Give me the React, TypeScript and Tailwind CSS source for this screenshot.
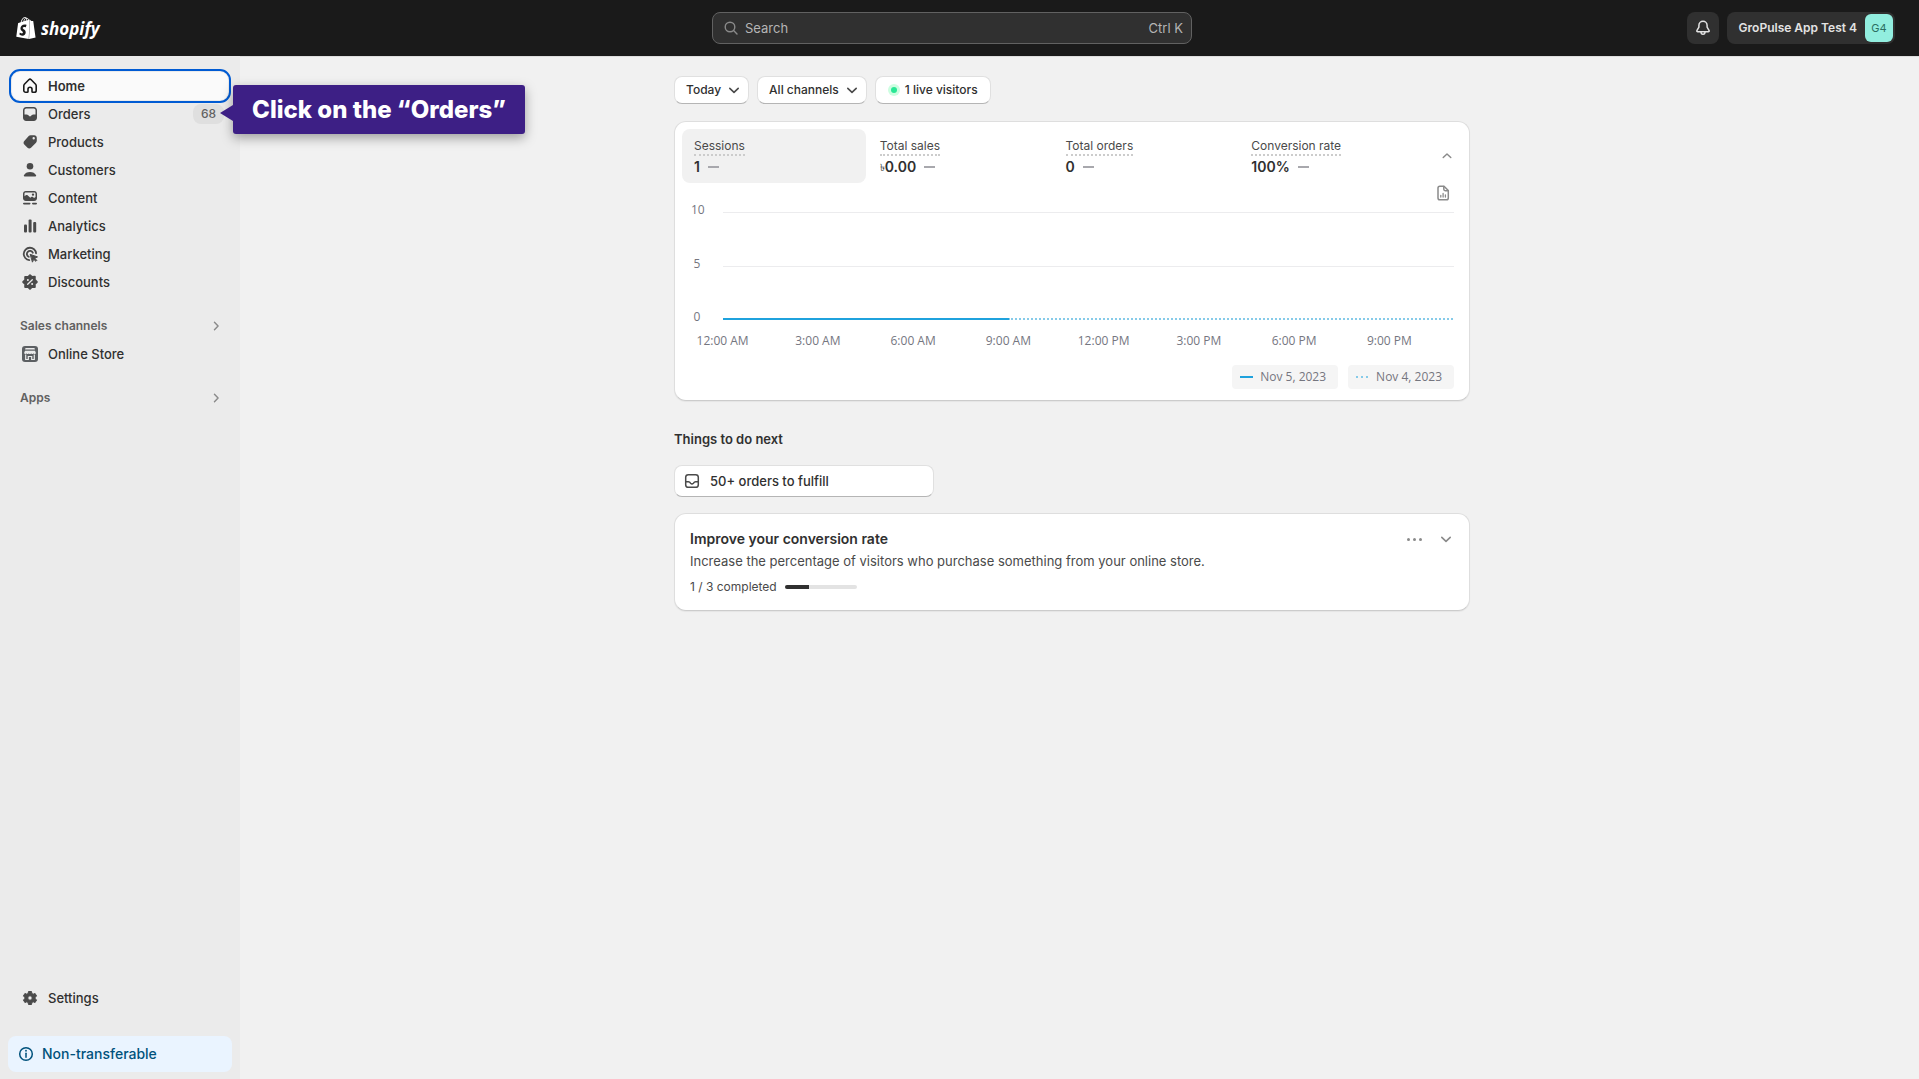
import React from 'react';
import { SiShopify } from 'react-icons/si';

type IconProps = { className?: string };

const HomeIcon = ({ className }: IconProps) => (
  <svg viewBox="0 0 20 20" className={className} fill="none" stroke="currentColor" strokeWidth="1.6" strokeLinejoin="round" strokeLinecap="round">
    <path d="M8 13.2v2.3c0 .4-.3.8-.8.8H5.6c-1 0-1.8-.8-1.8-1.8V9.7c0-.6.2-1.1.6-1.5l4.4-4.5c.7-.7 1.7-.7 2.4 0l4.4 4.5c.4.4.6.9.6 1.5v4.8c0 1-.8 1.8-1.8 1.8h-1.6c-.5 0-.8-.4-.8-.8v-2.3c0-1.100-.9-2-2-2s-2 .9-2 2z" />
  </svg>
);

const InboxFilled = ({ className }: IconProps) => (
  <svg viewBox="0 0 20 20" className={className} fill="currentColor">
    <path fillRule="evenodd" d="M6.2 3h7.600C15.600 3 17 4.400 17 6.200v7.600c0 1.800-1.400 3.200-3.200 3.200H6.200C4.400 17 3 15.600 3 13.800V6.200C3 4.400 4.400 3 6.200 3zm.1 1.500c-1 0-1.800.8-1.800 1.800V10.500h2.200c.6 0 1 .2 1.400.6l1 1c.5.5 1.300.5 1.800 0l1-1c.4-.4.8-.6 1.400-.6h2.200V6.300c0-1-.8-1.800-1.800-1.800z" />
  </svg>
);

const InboxOutline = ({ className }: IconProps) => (
  <svg viewBox="0 0 20 20" className={className} fill="none" stroke="currentColor" strokeWidth="1.500">
    <rect x="3.700" y="3.700" width="12.600" height="12.600" rx="2.600" />
    <path d="M3.700 10.700h2.800c.4 0 .7.200 1 .4l1.100 1.200c.8.800 2 .8 2.800 0l1.100-1.200c.3-.2.600-.4 1-.4h2.800" />
  </svg>
);

const TagIcon = ({ className }: IconProps) => (
  <svg viewBox="0 0 20 20" className={className} fill="currentColor">
    <path fillRule="evenodd" d="M10.500 3.200h3.800c1.400 0 2.500 1.100 2.500 2.500v3c0 .8-.3 1.500-.8 2l-5 5c-1 1-2.500 1-3.500 0l-3.200-3.200c-1-1-1-2.500 0-3.500l4.400-5.100c.5-.5 1.100-.7 1.800-.7zm3.200 4.300a1.200 1.200 0 1 0 0-2.400 1.200 1.200 0 0 0 0 2.400z" />
  </svg>
);

const PersonIcon = ({ className }: IconProps) => (
  <svg viewBox="0 0 20 20" className={className} fill="currentColor">
    <circle cx="10" cy="6.300" r="3.300" />
    <path d="M4.600 16.500c-.6 0-1-.6-.7-1.200C4.900 13.200 7.200 12 10 12s5.100 1.200 6.100 3.300c.3.600-.1 1.200-.7 1.200z" />
  </svg>
);

const ContentIcon = ({ className }: IconProps) => (
  <svg viewBox="0 0 20 20" className={className} fill="currentColor">
    <path fillRule="evenodd" d="M5.800 3h8.400C15.700 3 17 4.300 17 5.800v4.400c0 1.500-1.300 2.800-2.800 2.800H5.800C4.300 13 3 11.700 3 10.200V5.800C3 4.300 4.300 3 5.800 3zm0 1.500c-.8 0-1.300.5-1.300 1.300v2.500l1.300-1c.6-.5 1.400-.5 2 .1L10.300 9.700l.9-.7c.6-.4 1.300-.4 1.800 0l1 .9 1.500-.9V5.800c0-.8-.5-1.300-1.300-1.300zM13 5.400a1.200 1.200 0 1 1 0 2.400 1.200 1.200 0 0 1 0-2.400z" />
    <rect x="3" y="14.700" width="7.500" height="1.700" rx=".8" />
    <rect x="12" y="14.700" width="5" height="1.700" rx=".8" />
  </svg>
);

const BarsIcon = ({ className }: IconProps) => (
  <svg viewBox="0 0 20 20" className={className} fill="currentColor">
    <rect x="4" y="8.500" width="3" height="8" rx="1" />
    <rect x="8.600" y="3.500" width="3" height="13" rx="1" />
    <rect x="13.200" y="6" width="3" height="10.500" rx="1" />
  </svg>
);

const TargetIcon = ({ className }: IconProps) => (
  <svg viewBox="0 0 20 20" className={className} fill="none" stroke="currentColor" strokeWidth="1.800" strokeLinecap="round">
    <path d="M9.300 16.100A6.200 6.200 0 1 1 16.100 9.300" />
    <path d="M8.700 12.800A3.100 3.100 0 1 1 12.800 8.700" />
    <path d="M10.500 10.500l7 2.400-2.700 1.300 2 2.200-.9.900-2.200-2-1.100 2.500z" fill="currentColor" strokeWidth="1" strokeLinejoin="round" />
  </svg>
);

const DiscountIcon = ({ className }: IconProps) => (
  <svg viewBox="0 0 20 20" className={className}>
    <path fill="currentColor" stroke="currentColor" strokeWidth="2" strokeLinejoin="round" d="M10 3.200l1.900 1.700 2.900-.1-.1 2.900L16.800 10l-2.100 2.100.1 2.900-2.900-.1L10 16.800l-1.900-1.900-2.900.1.100-2.900L3.200 10l2.100-2.100L5.200 5l2.900.1z" />
    <path stroke="#ebebeb" strokeWidth="1.300" strokeLinecap="round" d="M12.300 7.700l-4.600 4.600" />
    <circle cx="7.900" cy="8" r="1" fill="#ebebeb" />
    <circle cx="12.100" cy="12" r="1" fill="#ebebeb" />
  </svg>
);

const StoreIcon = ({ className }: IconProps) => (
  <svg viewBox="0 0 20 20" className={className}>
    <rect x="2" y="2" width="16" height="16" rx="3" fill="#5c5f62" />
    <path fill="#ebebeb" d="M5.500 4h9l.4 1.600H5.100zM5 6.800h10l.9 2.300c0 1.200-2.400 1.200-2.400.2 0 1-2.300 1-2.300 0 0 1-2.400 1-2.400 0 0 1-2.300 1-2.300 0 0 1-2.400 1-2.400-.2z" />
    <path fill="none" stroke="#ebebeb" strokeWidth="1.200" d="M5.700 10.500v5h2.600v-3h3.400v3h2.600v-5" />
  </svg>
);

const GearIcon = ({ className }: IconProps) => (
  <svg viewBox="0 0 20 20" className={className} fill="currentColor">
    <path
      fillRule="evenodd"
      stroke="currentColor"
      strokeWidth="1"
      strokeLinejoin="round"
      d="M8.500 3.500h3l.4 2 1.200.7 2-.7 1.500 2.600L15 9.500v1l1.600 1.400-1.500 2.600-2-.7-1.200.7-.4 2h-3l-.4-2-1.200-.7-2 .7-1.500-2.600L5 10.500v-1L3.400 8.100l1.500-2.600 2 .7 1.200-.7zM10 12.200a2.200 2.200 0 1 0 0-4.400 2.200 2.200 0 0 0 0 4.400z"
    />
  </svg>
);

const InfoIcon = ({ className }: IconProps) => (
  <svg viewBox="0 0 20 20" className={className} fill="none" stroke="currentColor" strokeWidth="1.500" strokeLinecap="round">
    <circle cx="10" cy="10" r="6.300" />
    <path d="M10 9.300v4" />
    <path d="M10 6.700v.1" strokeWidth="1.800" />
  </svg>
);

const SearchIcon = ({ className }: IconProps) => (
  <svg viewBox="0 0 20 20" className={className} fill="none" stroke="currentColor" strokeWidth="1.400" strokeLinecap="round">
    <circle cx="9" cy="9" r="4.800" />
    <path d="M12.600 12.600l3.400 3.400" />
  </svg>
);

const BellIcon = ({ className }: IconProps) => (
  <svg viewBox="0 0 20 20" className={className} fill="none" stroke="currentColor" strokeWidth="1.500" strokeLinejoin="round">
    <path d="M10 3.300c-2.300 0-4.100 1.800-4.100 4.100v1.800L4 12.300c-.5.800 0 1.500.8 1.500h10.400c.8 0 1.300-.7.8-1.500l-1.900-3.100V7.400c0-2.300-1.800-4.100-4.100-4.100z" />
    <path d="M8 14c0 1.300.9 2.300 2 2.300s2-1 2-2.300" />
  </svg>
);

const Chevron = ({ className }: IconProps) => (
  <svg viewBox="0 0 20 20" className={className} fill="none" stroke="currentColor" strokeWidth="1.600" strokeLinecap="round" strokeLinejoin="round">
    <path d="M5.800 8.300l4.200 4 4.200-4" />
  </svg>
);

const ReportIcon = ({ className }: IconProps) => (
  <svg viewBox="0 0 20 20" className={className} fill="none" stroke="currentColor" strokeWidth="1.500" strokeLinejoin="round" strokeLinecap="round">
    <path d="M11 3.200H6.800c-1 0-1.800.8-1.800 1.800v10c0 1 .8 1.800 1.800 1.800h6.700c1 0 1.800-.8 1.800-1.800V7.500z" />
    <path d="M10.800 3.500v2.800c0 .8.600 1.400 1.400 1.400H15" />
    <path d="M7.800 12.300v1.700M10.100 10.500V14M12.400 12v2" strokeWidth="1.300" />
  </svg>
);

const navItems = [
  { label: 'Orders', Icon: InboxFilled, badge: '68' },
  { label: 'Products', Icon: TagIcon },
  { label: 'Customers', Icon: PersonIcon },
  { label: 'Content', Icon: ContentIcon },
  { label: 'Analytics', Icon: BarsIcon },
  { label: 'Marketing', Icon: TargetIcon },
  { label: 'Discounts', Icon: DiscountIcon },
];

const metrics = [
  { label: 'Sessions', value: '1', active: true },
  { label: 'Total sales', currency: '৳', value: '0.00' },
  { label: 'Total orders', value: '0' },
  { label: 'Conversion rate', value: '100%' },
];

const hours = ['12:00 AM', '3:00 AM', '6:00 AM', '9:00 AM', '12:00 PM', '3:00 PM', '6:00 PM', '9:00 PM'];

function Header() {
  return (
    <header className="grid h-14 shrink-0 grid-cols-[1fr_480px_1fr] items-center bg-[#1a1a1a] pr-[15px] shadow-[0_1px_0_#dedede]">
      <a href="#" aria-label="Shopify" className="flex items-center gap-1 pl-[15px] text-white">
        <SiShopify className="h-6 w-[22px]" />
        <span className="pt-0.5 font-['Open_Sans',sans-serif] text-[17px] leading-6 font-bold italic">shopify</span>
      </a>
      <label className="flex h-8 items-center gap-1 rounded-lg border border-[#616161] bg-[#303030] pr-2 pl-2 text-[13px] text-[#b5b5b5]">
        <SearchIcon className="size-5 text-[#8a8a8a]" />
        <input type="text" placeholder="Search" aria-label="Search" className="min-w-0 flex-1 bg-transparent outline-none placeholder:text-[#b5b5b5]" />
        <span>Ctrl K</span>
      </label>
      <div className="flex justify-end gap-2 pr-[9px]">
        <button aria-label="Notifications" className="flex size-8 items-center justify-center rounded-lg bg-[#303030] text-[#e3e3e3]">
          <BellIcon className="size-5" />
        </button>
        <button className="flex h-8 items-center gap-2 rounded-lg bg-[#303030] pr-0.5 pl-3 text-xs font-semibold text-[#e3e3e3]">
          GroPulse App Test 4
          <span className="flex size-7 items-center justify-center rounded-md bg-[#92eedf] text-[11px] font-normal text-[#2c6e63]">G4</span>
        </button>
      </div>
    </header>
  );
}

function Tooltip() {
  return (
    <div role="tooltip" className="absolute top-[-15px] left-[221px] z-10 flex h-[49px] w-[292px] items-center justify-center rounded-[3px] bg-[#3d1f85] text-2xl font-extrabold whitespace-nowrap text-white shadow-[0_4px_12px_rgba(0,0,0,0.35)]">
      <svg viewBox="0 0 13 16" className="absolute top-5 right-full h-4 w-[13px]" fill="#3d1f85">
        <path d="M13 0v16L0 8z" />
      </svg>
      Click on the “Orders”
    </div>
  );
}

function Sidebar() {
  return (
    <aside className="flex w-60 shrink-0 flex-col bg-[#ebebeb] text-[13px] font-medium text-[#303030]">
      <nav className="px-3 pt-4">
        <a href="#" className="flex h-7 items-center gap-2 rounded-lg bg-[#fafafa] pl-2 font-semibold outline-2 outline-offset-1 outline-[#005bd3]">
          <HomeIcon className="size-5 text-[#1a1a1a]" />
          Home
        </a>
        {navItems.map(({ label, Icon, badge }) => (
          <div key={label} className="relative">
            <a href="#" className="flex h-7 items-center gap-2 pr-1 pl-2">
              <Icon className="size-5 text-[#4a4a4a]" />
              <span className="flex-1">{label}</span>
              {badge && <span className="flex h-5 items-center rounded-lg bg-[#dfdfdf] px-2 text-xs text-[#616161]">{badge}</span>}
            </a>
            {badge && <Tooltip />}
          </div>
        ))}
        <button className="mt-4 flex h-7 w-full items-center justify-between pr-[3px] pl-2 text-xs font-semibold text-[#616161]">
          Sales channels
          <Chevron className="size-[18px] -rotate-90 text-[#8a8a8a]" />
        </button>
        <a href="#" className="flex h-7 items-center gap-2 pl-2">
          <StoreIcon className="size-5" />
          Online Store
        </a>
        <button className="mt-4 flex h-7 w-full items-center justify-between pr-[3px] pl-2 text-xs font-semibold text-[#616161]">
          Apps
          <Chevron className="size-[18px] -rotate-90 text-[#8a8a8a]" />
        </button>
      </nav>
      <div className="mt-auto px-3">
        <a href="#" className="flex h-7 items-center gap-2 pl-2">
          <GearIcon className="size-5 text-[#4a4a4a]" />
          Settings
        </a>
      </div>
      <div className="mx-2 mt-6 mb-[7px] flex h-9 items-center gap-1.5 rounded-lg bg-[#eaf4ff] pl-2 text-sm text-[#00527c]">
        <InfoIcon className="size-5" />
        Non-transferable
      </div>
    </aside>
  );
}

function Filters() {
  const base = 'flex h-7 items-center rounded-lg border border-[#e0e0e0] border-b-[#b5b5b5] bg-white text-xs font-medium text-[#303030]';
  return (
    <div className="flex gap-2">
      <button className={`${base} gap-[3px] pr-1 pl-[11px]`}>
        Today
        <Chevron className="size-5 text-[#4a4a4a]" />
      </button>
      <button className={`${base} gap-[3px] pr-1 pl-[11px]`}>
        All channels
        <Chevron className="size-5 text-[#4a4a4a]" />
      </button>
      <button className={`${base} gap-[5px] px-3`}>
        <span className="flex size-3 items-center justify-center rounded-full bg-[#cdfee1]">
          <span className="size-1.5 rounded-full bg-[#29e795]" />
        </span>
        1 live visitors
      </button>
    </div>
  );
}

function Chart() {
  return (
    <div className="font-['Open_Sans',sans-serif] text-xs leading-4 text-[#75767f]">
      <div className="relative ml-[41px] h-[107px]">
        {[
          ['10', '0%'],
          ['5', '50%'],
          ['0', '100%'],
        ].map(([label, top]) => (
          <div key={label} className="absolute inset-x-0" style={{ top }}>
            <div className={label === '0' ? 'hidden' : 'h-px bg-[#ececee]'} />
            <span className="absolute -top-2.5 -left-8 w-3 text-center">{label}</span>
          </div>
        ))}
        <svg className="absolute -bottom-2 left-0 h-4 w-full">
          <line x1="0" y1="8" x2="100%" y2="8" stroke="#86cbe9" strokeWidth="2" strokeDasharray="2 2" />
          <line x1="0" y1="8" x2="39.2%" y2="8" stroke="#1fa2dd" strokeWidth="2" />
        </svg>
      </div>
      <div className="mt-3.5 -ml-[7px] flex pr-[17px]">
        {hours.map((h) => (
          <span key={h} className="w-0 flex-1 text-center whitespace-nowrap">
            {h}
          </span>
        ))}
      </div>
      <div className="mt-4 flex justify-end gap-2.5">
        {[
          ['Nov 5, 2023', '#1fa2dd', '0'],
          ['Nov 4, 2023', '#86cbe9', '2 3'],
        ].map(([label, color, dash]) => (
          <button key={label} className="flex h-6 items-center gap-[7px] rounded-sm bg-[#f5f5f5] pr-3 pl-2">
            <svg viewBox="0 0 13 2" className="h-0.5 w-[13px]">
              <path d="M0 1h13" stroke={color} strokeWidth="2" strokeDasharray={dash} />
            </svg>
            {label}
          </button>
        ))}
      </div>
    </div>
  );
}

const card = 'rounded-xl border border-[#dedede] border-b-[#cccccc] bg-white shadow-[0_1px_1px_rgba(0,0,0,0.05)]';

function AnalyticsCard() {
  return (
    <section className={`${card} mt-[17px] pt-[7px] pr-[15px] pb-[11px] pl-[7px]`}>
      <div className="flex items-center">
        <div className="grid flex-1 grid-cols-4 gap-0.5 pr-[15px]">
          {metrics.map((m) => (
            <button key={m.label} className={m.active ? 'h-[54px] rounded-lg bg-[#f1f1f1] px-3 text-left' : 'h-[54px] rounded-lg px-3 text-left'}>
              <span className="inline-block border-b-2 border-dotted border-[#cccccc] text-xs leading-[17px] text-[#4a4a4a]">{m.label}</span>
              <span className="flex items-center gap-2 pt-px text-sm leading-5 font-semibold text-[#303030]">
                <span className="flex items-center">
                  {m.currency && <span className="text-[10px] font-normal">{m.currency}</span>}
                  {m.value}
                </span>
                <span className="h-0.5 w-[11px] bg-[#a8a8ad]" />
              </span>
            </button>
          ))}
        </div>
        <button aria-label="Collapse" className="-mr-0.5 text-[#8a8a8a]">
          <Chevron className="size-[18px] rotate-180" />
        </button>
      </div>
      <div className="flex justify-end">
        <button aria-label="View report" className="mr-px text-[#8a8a8a]">
          <ReportIcon className="size-5" />
        </button>
      </div>
      <div className="mt-[9px]">
        <Chart />
      </div>
    </section>
  );
}

function GuideCard() {
  return (
    <section className={`${card} mt-4 h-[98px] px-[15px] pt-[15px]`}>
      <div className="flex items-center">
        <h3 className="flex-1 text-sm leading-5 font-semibold text-[#303030]">Improve your conversion rate</h3>
        <button aria-label="More actions" className="mr-[14px] flex gap-[3px]">
          <span className="size-[3px] rounded-full bg-[#8a8a8a]" />
          <span className="size-[3px] rounded-full bg-[#8a8a8a]" />
          <span className="size-[3px] rounded-full bg-[#8a8a8a]" />
        </button>
        <button aria-label="Expand" className="-mr-0.5 text-[#8a8a8a]">
          <Chevron className="size-5" />
        </button>
      </div>
      <p className="mt-0.5 text-[13px] leading-5 text-[#4a4a4a]">Increase the percentage of visitors who purchase something from your online store.</p>
      <div className="mt-1.5 flex items-center gap-2 text-xs leading-5 text-[#4a4a4a]">
        1 / 3 completed
        <div className="h-1 w-[72px] overflow-hidden rounded-sm bg-[#e3e3e3]">
          <div className="h-full w-1/3 bg-[#303030]" />
        </div>
      </div>
    </section>
  );
}

export default function App() {
  return (
    <div className="flex min-h-screen flex-col bg-[#f1f1f1] font-[Inter,sans-serif] text-[13px] leading-5">
      <Header />
      <div className="flex flex-1">
        <Sidebar />
        <main className="flex-1 pt-5 pr-[15px]">
          <div className="mx-auto max-w-[796px]">
            <Filters />
            <AnalyticsCard />
            <h2 className="mt-7 text-[13px] leading-5 font-semibold text-[#303030]">Things to do next</h2>
            <button className="mt-4 flex h-8 w-[260px] items-center gap-2 rounded-lg border border-[#e0e0e0] border-b-[#b5b5b5] bg-white pl-[7px] font-medium text-[#303030]">
              <InboxOutline className="size-5 text-[#4a4a4a]" />
              50+ orders to fulfill
            </button>
            <GuideCard />
          </div>
        </main>
      </div>
    </div>
  );
}
